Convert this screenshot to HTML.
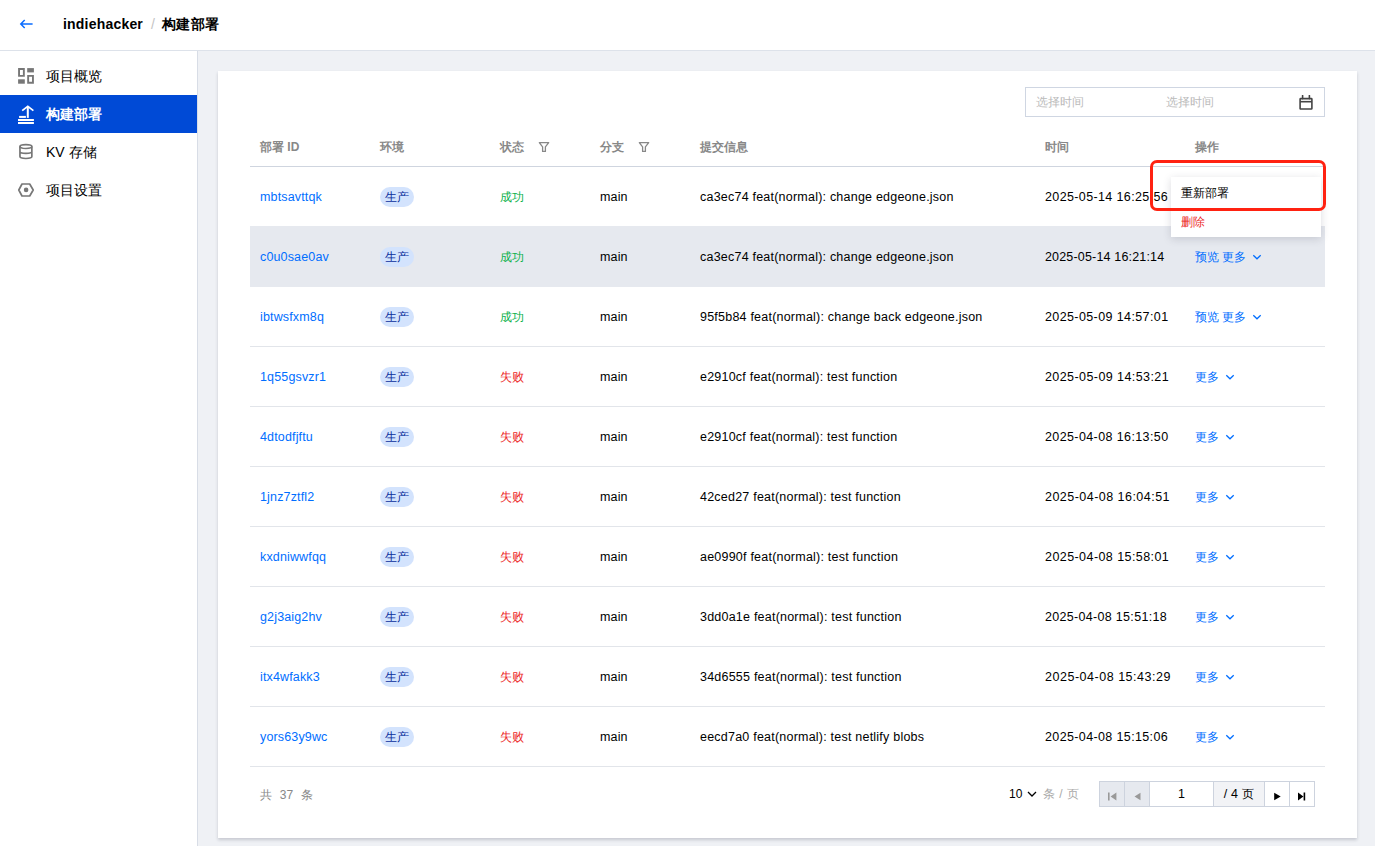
<!DOCTYPE html>
<html><head><meta charset="utf-8">
<style>
*{box-sizing:border-box;margin:0;padding:0}
html,body{width:1375px;height:846px;overflow:hidden;background:#eff1f5;font-family:"Liberation Sans",sans-serif;font-size:12px;color:#000}
.hdr{position:absolute;left:0;top:0;width:1375px;height:51px;background:#fff;border-bottom:1px solid #dde2ea}
.back{position:absolute;left:18px;top:17px}
.crumb{position:absolute;left:63px;top:15px;font-size:14px;font-weight:bold;line-height:18px;white-space:nowrap;letter-spacing:0.2px}
.crumb .sep{color:#c4c4c4;font-weight:normal;margin:0 7px 0 8px}
.side{position:absolute;left:0;top:51px;width:198px;height:795px;background:#fff;border-right:1px solid #d8dde6}
.mi{position:absolute;left:0;width:197px;height:38px;font-size:14px;line-height:38px}
.mi .t{position:absolute;left:46px;top:0}
.mi svg{position:absolute;left:14px;top:7px}
.mi.act{background:#004ad6;color:#fff;font-weight:bold}
.card{position:absolute;left:218px;top:71px;width:1139px;height:767px;background:#fff;box-shadow:0 2px 3px rgba(54,58,80,.22)}
.picker{position:absolute;left:807px;top:16px;width:300px;height:30px;border:1px solid #cfd6e2}
.picker span{position:absolute;top:6px;color:#bbb;font-size:12px;line-height:16px}
.picker svg{position:absolute;left:273px;top:7px}
.th{position:absolute;top:68px;font-size:12px;line-height:16px;color:#888;font-weight:bold;white-space:nowrap}
.th .fn{position:absolute;top:2px}
.hline{position:absolute;left:32px;top:95px;width:1075px;height:1px;background:#cfd5df}
.row{position:absolute;left:32px;width:1075px;height:61px;border-bottom:1px solid #e2e5ea}
.row.hov{background:#e6e9ef;border-bottom-color:#e6e9ef}
.row .c{position:absolute;top:23px;line-height:16px;white-space:nowrap}
.lk{color:#006eff}
.en{font-size:12.5px;letter-spacing:0.15px}
.st.ok{color:#0db14b}
.st.fail{color:#ec2a2a}
.tag{position:absolute;top:21px;height:20px;line-height:20px;padding:0 5px;border-radius:10px;background:#d3e3fd;color:#0b2f9c;font-size:12px}
.ops .chev{position:relative;top:-1px;margin-left:6px}
.foot{position:absolute;left:42px;top:716px;color:#888;line-height:16px;word-spacing:4.5px}
.psz{position:absolute;left:791px;top:715px;line-height:16px;white-space:nowrap}
.psz .chev{position:relative;top:-1px;margin-left:5px}
.psz .u{color:#aaa;margin-left:6px;letter-spacing:0.3px}
.pager{position:absolute;left:881px;top:710px;height:26px;width:216px;border:1px solid #cdd3de;display:flex}
.pager div{height:24px;border-right:1px solid #cdd3de;position:relative;line-height:24px;text-align:center}
.menu{position:absolute;left:953px;top:106px;width:150px;height:60px;background:#fff;box-shadow:0 2px 8px rgba(54,58,80,.18)}
.menu div{position:absolute;left:10px;line-height:16px;font-size:12px}
.redbox{position:absolute;left:932px;top:89px;width:176px;height:51px;border:3px solid #ff2211;border-radius:7px}
</style></head>
<body>
<div class="hdr">
  <svg class="back" width="18" height="14" viewBox="0 0 18 14"><path d="M2.8 7H14.6M6.7 3L2.8 7L6.7 11" fill="none" stroke="#0a6cff" stroke-width="1.5"/></svg>
  <div class="crumb">indiehacker<span class="sep">/</span><span style="font-weight:bold">构建部署</span></div>
</div>
<div class="side">
  <div class="mi" style="top:6px">
    <svg width="26" height="24" viewBox="0 0 26 24"><g fill="#777"><path fill-rule="evenodd" d="M4.1 4.1h6.7v8.7H4.1zM6 6v4.9h2.9V6z"/><rect x="13.2" y="4.1" width="6.7" height="4.3"/><rect x="4.1" y="15.3" width="6.7" height="4.4"/><path fill-rule="evenodd" d="M13.2 10.9h6.7v8.8h-6.7zM15.1 12.8v5h2.9v-5z"/></g></svg>
    <span class="t">项目概览</span></div>
  <div class="mi act" style="top:44px">
    <svg width="26" height="24" viewBox="0 0 26 24"><g fill="#fff"><rect x="5.1" y="13.9" width="6.8" height="2"/><rect x="4" y="17" width="15.9" height="2"/><rect x="4" y="20" width="15.9" height="2"/><rect x="12.8" y="5" width="2" height="10.9"/></g><path d="M8.2 8.6L13.8 4.4L19.4 8.6" fill="none" stroke="#fff" stroke-width="1.8"/></svg>
    <span class="t">构建部署</span></div>
  <div class="mi" style="top:82px">
    <svg width="26" height="24" viewBox="0 0 26 24"><g fill="none" stroke="#777" stroke-width="1.7"><ellipse cx="11.9" cy="6.6" rx="5.95" ry="1.9"/><path d="M5.95 6.6V16.6A5.95 1.9 0 0 0 17.85 16.6V6.6M5.95 11.5A5.95 1.9 0 0 0 17.85 11.5"/></g></svg>
    <span class="t">KV 存储</span></div>
  <div class="mi" style="top:120px">
    <svg width="26" height="24" viewBox="0 0 26 24"><path d="M4.8 12L8 6h7.7l3.5 6l-3.5 6H8z" fill="none" stroke="#777" stroke-width="1.7" stroke-linejoin="round"/><circle cx="12.1" cy="11.9" r="2.3" fill="#777"/></svg>
    <span class="t">项目设置</span></div>
</div>
<div class="card">
  <div class="picker"><span style="left:10px">选择时间</span><span style="left:140px">选择时间</span>
    <svg width="16" height="16" viewBox="0 0 16 16"><g fill="none" stroke="#444" stroke-width="1.6"><rect x="1.1" y="3.6" width="11.8" height="10.4" rx="0.6"/><path d="M1.1 6.7h11.8"/><path d="M3.6 0.6v3M10.4 0.6v3" stroke-linecap="round"/></g></svg>
  </div>
  <span class="th" style="left:42px">部署 ID</span>
  <span class="th" style="left:162px">环境</span>
  <span class="th" style="left:282px">状态<span style="position:relative;display:inline-block;width:22px"></span></span>
  <span class="th" style="left:382px">分支</span>
  <span class="th" style="left:482px">提交信息</span>
  <span class="th" style="left:827px">时间</span>
  <span class="th" style="left:977px">操作</span>
  <svg style="position:absolute;left:319px;top:69px" width="13" height="13" viewBox="0 0 13 13"><path d="M2.3 2.7H11.7L8.4 6.9V11.4H5.6V6.9Z" fill="none" stroke="#888" stroke-width="1.3" stroke-linejoin="round"/></svg>
  <svg style="position:absolute;left:419px;top:69px" width="13" height="13" viewBox="0 0 13 13"><path d="M2.3 2.7H11.7L8.4 6.9V11.4H5.6V6.9Z" fill="none" stroke="#888" stroke-width="1.3" stroke-linejoin="round"/></svg>
  <div class="hline"></div>
  <div class="row" style="top:95px">
<span class="c lk en" style="left:10px">mbtsavttqk</span><span class="tag" style="left:130px">生产</span><span class="c" style="left:250px"><span class="st ok">成功</span></span><span class="c en" style="left:350px">main</span><span class="c en" style="left:450px;letter-spacing:0.22px">ca3ec74 feat(normal): change edgeone.json</span><span class="c en" style="left:795px;letter-spacing:0.37px">2025-05-14 16:25:56</span><span class="c ops" style="left:945px"><span class="lk">预览</span> <span class="lk">更多</span><svg class="chev" width="10" height="6" viewBox="0 0 10 6"><path d="M1.3 1.2l3.7 3.6 3.7-3.6" fill="none" stroke="#006eff" stroke-width="1.25"/></svg></span></div><div class="row hov" style="top:155px">
<span class="c lk en" style="left:10px">c0u0sae0av</span><span class="tag" style="left:130px">生产</span><span class="c" style="left:250px"><span class="st ok">成功</span></span><span class="c en" style="left:350px">main</span><span class="c en" style="left:450px;letter-spacing:0.22px">ca3ec74 feat(normal): change edgeone.json</span><span class="c en" style="left:795px;letter-spacing:0.17px">2025-05-14 16:21:14</span><span class="c ops" style="left:945px"><span class="lk">预览</span> <span class="lk">更多</span><svg class="chev" width="10" height="6" viewBox="0 0 10 6"><path d="M1.3 1.2l3.7 3.6 3.7-3.6" fill="none" stroke="#006eff" stroke-width="1.25"/></svg></span></div><div class="row" style="top:215px">
<span class="c lk en" style="left:10px">ibtwsfxm8q</span><span class="tag" style="left:130px">生产</span><span class="c" style="left:250px"><span class="st ok">成功</span></span><span class="c en" style="left:350px">main</span><span class="c en" style="left:450px;letter-spacing:0.22px">95f5b84 feat(normal): change back edgeone.json</span><span class="c en" style="left:795px;letter-spacing:0.39px">2025-05-09 14:57:01</span><span class="c ops" style="left:945px"><span class="lk">预览</span> <span class="lk">更多</span><svg class="chev" width="10" height="6" viewBox="0 0 10 6"><path d="M1.3 1.2l3.7 3.6 3.7-3.6" fill="none" stroke="#006eff" stroke-width="1.25"/></svg></span></div><div class="row" style="top:275px">
<span class="c lk en" style="left:10px">1q55gsvzr1</span><span class="tag" style="left:130px">生产</span><span class="c" style="left:250px"><span class="st fail">失败</span></span><span class="c en" style="left:350px">main</span><span class="c en" style="left:450px;letter-spacing:0.22px">e2910cf feat(normal): test function</span><span class="c en" style="left:795px;letter-spacing:0.42px">2025-05-09 14:53:21</span><span class="c ops" style="left:945px"><span class="lk">更多</span><svg class="chev" width="10" height="6" viewBox="0 0 10 6"><path d="M1.3 1.2l3.7 3.6 3.7-3.6" fill="none" stroke="#006eff" stroke-width="1.25"/></svg></span></div><div class="row" style="top:335px">
<span class="c lk en" style="left:10px">4dtodfjftu</span><span class="tag" style="left:130px">生产</span><span class="c" style="left:250px"><span class="st fail">失败</span></span><span class="c en" style="left:350px">main</span><span class="c en" style="left:450px;letter-spacing:0.22px">e2910cf feat(normal): test function</span><span class="c en" style="left:795px;letter-spacing:0.39px">2025-04-08 16:13:50</span><span class="c ops" style="left:945px"><span class="lk">更多</span><svg class="chev" width="10" height="6" viewBox="0 0 10 6"><path d="M1.3 1.2l3.7 3.6 3.7-3.6" fill="none" stroke="#006eff" stroke-width="1.25"/></svg></span></div><div class="row" style="top:395px">
<span class="c lk en" style="left:10px">1jnz7ztfl2</span><span class="tag" style="left:130px">生产</span><span class="c" style="left:250px"><span class="st fail">失败</span></span><span class="c en" style="left:350px">main</span><span class="c en" style="left:450px;letter-spacing:0.22px">42ced27 feat(normal): test function</span><span class="c en" style="left:795px;letter-spacing:0.47px">2025-04-08 16:04:51</span><span class="c ops" style="left:945px"><span class="lk">更多</span><svg class="chev" width="10" height="6" viewBox="0 0 10 6"><path d="M1.3 1.2l3.7 3.6 3.7-3.6" fill="none" stroke="#006eff" stroke-width="1.25"/></svg></span></div><div class="row" style="top:455px">
<span class="c lk en" style="left:10px">kxdniwwfqq</span><span class="tag" style="left:130px">生产</span><span class="c" style="left:250px"><span class="st fail">失败</span></span><span class="c en" style="left:350px">main</span><span class="c en" style="left:450px;letter-spacing:0.22px">ae0990f feat(normal): test function</span><span class="c en" style="left:795px;letter-spacing:0.43px">2025-04-08 15:58:01</span><span class="c ops" style="left:945px"><span class="lk">更多</span><svg class="chev" width="10" height="6" viewBox="0 0 10 6"><path d="M1.3 1.2l3.7 3.6 3.7-3.6" fill="none" stroke="#006eff" stroke-width="1.25"/></svg></span></div><div class="row" style="top:515px">
<span class="c lk en" style="left:10px">g2j3aig2hv</span><span class="tag" style="left:130px">生产</span><span class="c" style="left:250px"><span class="st fail">失败</span></span><span class="c en" style="left:350px">main</span><span class="c en" style="left:450px;letter-spacing:0.22px">3dd0a1e feat(normal): test function</span><span class="c en" style="left:795px;letter-spacing:0.31px">2025-04-08 15:51:18</span><span class="c ops" style="left:945px"><span class="lk">更多</span><svg class="chev" width="10" height="6" viewBox="0 0 10 6"><path d="M1.3 1.2l3.7 3.6 3.7-3.6" fill="none" stroke="#006eff" stroke-width="1.25"/></svg></span></div><div class="row" style="top:575px">
<span class="c lk en" style="left:10px">itx4wfakk3</span><span class="tag" style="left:130px">生产</span><span class="c" style="left:250px"><span class="st fail">失败</span></span><span class="c en" style="left:350px">main</span><span class="c en" style="left:450px;letter-spacing:0.22px">34d6555 feat(normal): test function</span><span class="c en" style="left:795px;letter-spacing:0.52px">2025-04-08 15:43:29</span><span class="c ops" style="left:945px"><span class="lk">更多</span><svg class="chev" width="10" height="6" viewBox="0 0 10 6"><path d="M1.3 1.2l3.7 3.6 3.7-3.6" fill="none" stroke="#006eff" stroke-width="1.25"/></svg></span></div><div class="row" style="top:635px">
<span class="c lk en" style="left:10px">yors63y9wc</span><span class="tag" style="left:130px">生产</span><span class="c" style="left:250px"><span class="st fail">失败</span></span><span class="c en" style="left:350px">main</span><span class="c en" style="left:450px;letter-spacing:0.22px">eecd7a0 feat(normal): test netlify blobs</span><span class="c en" style="left:795px;letter-spacing:0.37px">2025-04-08 15:15:06</span><span class="c ops" style="left:945px"><span class="lk">更多</span><svg class="chev" width="10" height="6" viewBox="0 0 10 6"><path d="M1.3 1.2l3.7 3.6 3.7-3.6" fill="none" stroke="#006eff" stroke-width="1.25"/></svg></span></div>
  <span class="foot">共 37 条</span>
  <span class="psz">10<svg class="chev" width="10" height="6" viewBox="0 0 10 6"><path d="M1 1l4 4 4-4" fill="none" stroke="#000" stroke-width="1.3"/></svg><span class="u">条 / 页</span></span>
  <div class="pager">
    <div style="width:25px;background:#e6e9ef"><svg width="10" height="9" viewBox="0 0 10 9" style="position:absolute;left:8px;top:10px"><path d="M0 0.5h1.6v8H0zM8.4 0.5v8L2.6 4.5z" fill="#999"/></svg></div>
    <div style="width:25px;background:#e6e9ef"><svg width="10" height="9" viewBox="0 0 10 9" style="position:absolute;left:9px;top:10px"><path d="M6.5 0.8v7.4L0.5 4.5z" fill="#999"/></svg></div>
    <div style="width:64px;background:#fff" class="en">1</div>
    <div style="width:51px;background:#f2f3f6;letter-spacing:0.5px"><span class="en">/ 4 </span>页</div>
    <div style="width:25px;background:#fff"><svg width="10" height="9" viewBox="0 0 10 9" style="position:absolute;left:8.6px;top:10px"><path d="M0.2 0.8v7.4L6.7 4.5z" fill="#000"/></svg></div>
    <div style="width:24px;background:#fff;border-right:0"><svg width="10" height="9" viewBox="0 0 10 9" style="position:absolute;left:8.3px;top:10px"><path d="M5.6 0.5h1.6v8H5.6zM0 0.5v8L5.4 4.5z" fill="#000"/></svg></div>
  </div>
  <div class="menu"><div style="top:8px">重新部署</div><div style="top:37px;color:#ec2a2a">删除</div></div>
  <div class="redbox"></div>
</div>
</body></html>
